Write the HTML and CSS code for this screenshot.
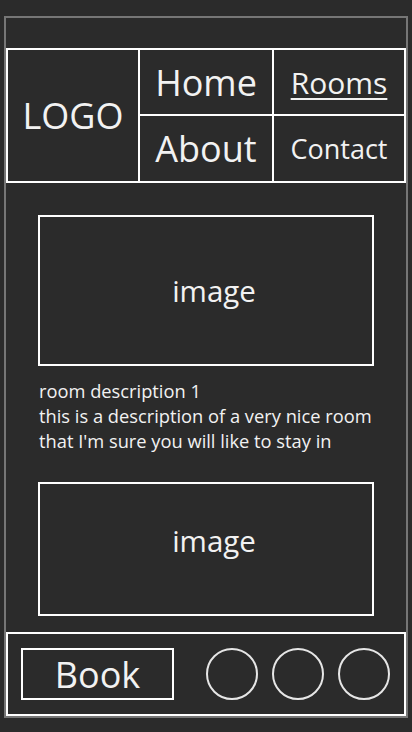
FILE: index.html
```html
<!DOCTYPE html>
<html>
<head>
<meta charset="utf-8">
<link rel="stylesheet" href="styles.css">
</head>
<body>
<div class="frame">
  <div class="topbar"></div>
  <header class="header">
    <div class="logo">LOGO</div>
    <a class="nav nav-home">Home</a>
    <a class="nav nav-rooms">Rooms</a>
    <a class="nav nav-about">About</a>
    <a class="nav nav-contact">Contact</a>
  </header>
  <main class="main">
    <div class="image image-1">image</div>
    <p class="desc">room description 1<br>this is a description of a very nice room<br>that I'm sure you will like to stay in</p>
    <div class="image image-2">image</div>
  </main>
  <footer class="footer">
    <div class="book">Book</div>
    <div class="circles">
      <span class="circle"></span>
      <span class="circle"></span>
      <span class="circle"></span>
    </div>
  </footer>
</div>
</body>
</html>
```

FILE: styles.css
```css
* { box-sizing: border-box; }
html, body {
  margin: 0;
  padding: 0;
  background: #2b2b2b;
  color: #f2f2f2;
  font-family: "Open Sans", "Noto Sans", sans-serif;
}
.frame {
  margin: 16px 4px 0;
  width: 404px;
  height: 702px;
  border: 2px solid #767676;
  display: flex;
  flex-direction: column;
}
.topbar { height: 30px; flex: none; }
.header {
  flex: none;
  height: 135px;
  border: 2px solid #fff;
  background: #fff;
  display: grid;
  grid-template-columns: 130px 132px 130px;
  grid-template-rows: 64px 65px;
  gap: 2px;
}
.logo, .nav {
  background: #2b2b2b;
  display: flex;
  align-items: center;
  justify-content: center;
  color: #f2f2f2;
}
.logo {
  grid-row: 1 / 3;
  font-size: 36px;
}
.nav-home, .nav-about { font-size: 36px; }
.nav-rooms { font-size: 30px; text-decoration: underline; text-decoration-thickness: 2px; text-underline-offset: 4px; }
.nav-contact { font-size: 27px; }
.main {
  flex: 1;
  overflow: hidden;
  padding: 32px 32px 0;
}
.image {
  border: 2px solid #fff;
  display: flex;
  align-items: center;
  justify-content: center;
  font-size: 29.5px;
  padding-left: 16px;
}
.image-1 { height: 151px; }
.image-2 { height: 134px; padding-bottom: 18px; }
.desc {
  margin: 12px 0 29px;
  padding-left: 1px;
  font-size: 18.3px;
  line-height: 25px;
}
.footer {
  flex: none;
  height: 84px;
  border: 2px solid #fff;
  display: flex;
  align-items: center;
  padding: 0 14px 0 13px;
}
.book {
  width: 153px;
  height: 52px;
  border: 2px solid #fff;
  display: flex;
  align-items: center;
  justify-content: center;
  font-size: 36px;
}
.circles {
  margin-left: auto;
  display: flex;
  gap: 14px;
}
.circle {
  width: 52px;
  height: 52px;
  border: 2px solid #e6e6e6;
  border-radius: 50%;
}
```
